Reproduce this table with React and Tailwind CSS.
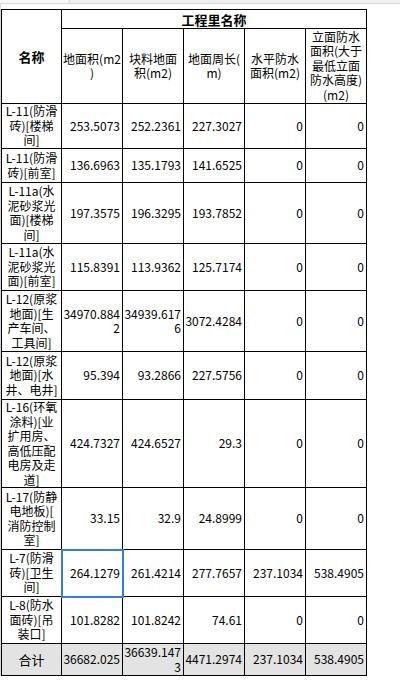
import React from 'react';

const rows = [
  { name: ['L-11(防滑', '砖)[楼梯', '间]'], h: 'h-[45px]', vals: ['253.5073', '252.2361', '227.3027', '0', '0'] },
  { name: ['L-11(防滑', '砖)[前室]'], h: 'h-[34px]', vals: ['136.6963', '135.1793', '141.6525', '0', '0'] },
  { name: ['L-11a(水', '泥砂浆光', '面)[楼梯', '间]'], h: 'h-[61px]', vals: ['197.3575', '196.3295', '193.7852', '0', '0'] },
  { name: ['L-11a(水', '泥砂浆光', '面)[前室]'], h: 'h-[47px]', vals: ['115.8391', '113.9362', '125.7174', '0', '0'] },
  { name: ['L-12(原浆', '地面)[生', '产车间、', '工具间]'], h: 'h-[61px]', vals: [['34970.884', '2'], ['34939.617', '6'], '3072.4284', '0', '0'] },
  { name: ['L-12(原浆', '地面)[水', '井、电井]'], h: 'h-[48px]', vals: ['95.394', '93.2866', '227.5756', '0', '0'] },
  { name: ['L-16(环氧', '涂料)[业', '扩用房、', '高低压配', '电房及走', '道]'], h: 'h-[88px]', vals: ['424.7327', '424.6527', '29.3', '0', '0'] },
  { name: ['L-17(防静', '电地板)[', '消防控制', '室]'], h: 'h-[62px]', vals: ['33.15', '32.9', '24.8999', '0', '0'] },
  { name: ['L-7(防滑', '砖)[卫生', '间]'], h: 'h-[47px]', vals: ['264.1279', '261.4214', '277.7657', '237.1034', '538.4905'], selected: 0 },
  { name: ['L-8(防水', '面砖)[吊', '装口]'], h: 'h-[47px]', vals: ['101.8282', '101.8242', '74.61', '0', '0'] },
];

const total = ['36682.025', ['36639.147', '3'], '4471.2974', '237.1034', '538.4905'];

const headers = [
  ['地面积(m2', ')'],
  ['块料地面', '积(m2)'],
  ['地面周长(', 'm)'],
  ['水平防水', '面积(m2)'],
  ['立面防水', '面积(大于', '最低立面', '防水高度)', '(m2)'],
];

const Lines = ({ lines }) => {
  const list = Array.isArray(lines) ? lines : [lines];
  return list.map((l, i) => (
    <div key={i} className="whitespace-nowrap h-[14.5px] leading-[14.5px]">{l}</div>
  ));
};

const cell = 'border border-black align-middle p-0';

export default function App() {
  return (
    <div
      className="w-[400px] h-[698px] bg-white text-black text-[12px] leading-[15px]"
      style={{ fontFamily: '"Noto Sans CJK SC", "DejaVu Sans", sans-serif' }}
    >
      <div className="h-[4px] bg-[#f0f0f0] border-b border-[#d9d9d9] flex">
        <div className="w-[70px] h-[3px] bg-[#f7f7f7] border-r border-[#d0d0d0] rounded-br" />
      </div>
      <div className="flex">
        <div className="w-px h-[672px] bg-[#d6d6d6]" />
        <table className="mt-[5px] border-collapse table-fixed w-[366px]">
          <colgroup>
            <col className="w-[60px]" />
            <col className="w-[61px]" />
            <col className="w-[61px]" />
            <col className="w-[61px]" />
            <col className="w-[61px]" />
            <col className="w-[61px]" />
          </colgroup>
          <thead>
            <tr className="h-[19px]">
              <th rowSpan={2} className={`${cell} text-[13px] font-bold text-center`}>名称</th>
              <th colSpan={5} className={`${cell} text-[13px] font-bold text-center`}>工程里名称</th>
            </tr>
            <tr className="h-[75px]">
              {headers.map((h, i) => (
                <th key={i} className={`${cell} font-normal text-center`}>
                  <Lines lines={h} />
                </th>
              ))}
            </tr>
          </thead>
          <tbody>
            {rows.map((r, ri) => (
              <tr key={ri} className={r.h}>
                <td className={`${cell} text-center`}>
                  <Lines lines={r.name} />
                </td>
                {r.vals.map((v, vi) => (
                  <td
                    key={vi}
                    className={`${cell} text-right pr-[2px] ${
                      r.selected === vi ? 'outline-2 outline-[#2f7de1] -outline-offset-1' : ''
                    }`}
                  >
                    <Lines lines={v} />
                  </td>
                ))}
              </tr>
            ))}
            <tr className="h-[32px] bg-[#e3e3e3]">
              <td className={`${cell} text-center text-[13px]`}>合计</td>
              {total.map((v, vi) => (
                <td key={vi} className={`${cell} text-right pr-[2px]`}>
                  <Lines lines={v} />
                </td>
              ))}
            </tr>
          </tbody>
        </table>
      </div>
    </div>
  );
}
